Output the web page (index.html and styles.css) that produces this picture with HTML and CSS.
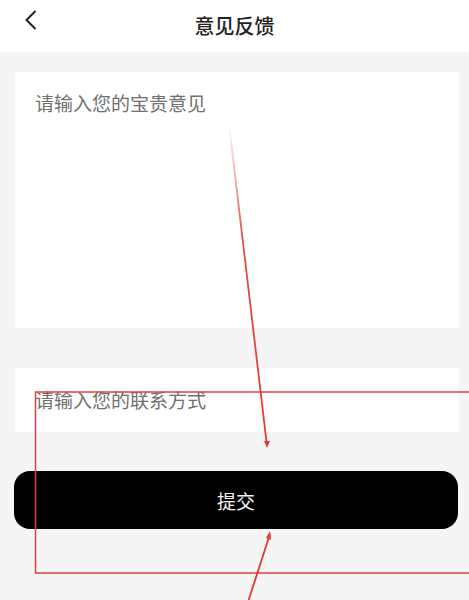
FILE: index.html
```html
<!DOCTYPE html>
<html lang="zh-CN">
<head>
<meta charset="UTF-8">
<title>意见反馈</title>
<link rel="stylesheet" href="styles.css">
</head>
<body>
    <div class="header">
        <span class="back">
            <svg width="12" height="20" viewBox="0 0 12 20"><path d="M10.5 1 L1.5 10 L10.5 19" fill="none" stroke="#222" stroke-width="2"/></svg>
        </span>
        <h1>意见反馈</h1>
    </div>

    <div class="container">
        <div class="card card-big">
            <div class="placeholder">请输入您的宝贵意见</div>
        </div>
        <div class="card card-small">
            <div class="placeholder">请输入您的联系方式</div>
        </div>
        <button type="button" class="submit">提交</button>
    </div>

    <!-- red marks drawn over the screenshot -->
    <svg class="marks" width="469" height="600" viewBox="0 0 469 600">
        <defs>
            <linearGradient id="fade" x1="0" y1="0" x2="0" y2="1">
                <stop offset="0" stop-color="#e23a36" stop-opacity="0"/>
                <stop offset="0.35" stop-color="#e23a36" stop-opacity="0.9"/>
                <stop offset="1" stop-color="#e23a36"/>
            </linearGradient>
        </defs>
        <rect x="35.5" y="392" width="450" height="181" fill="none" stroke="#e0403c" stroke-width="1.5"/>
        <path d="M229 124 L267 446" stroke="url(#fade)" stroke-width="1.8" fill="none"/>
        <path d="M264 441 L267 448 L270 441 Z" fill="#e23a36"/>
        <path d="M248 602 L270 534" stroke="#e23a36" stroke-width="1.8" fill="none"/>
        <path d="M266 538 L270 531 L271 540 Z" fill="#e23a36"/>
    </svg>
</body>
</html>
```

FILE: styles.css
```css
body {
    margin: 0;
    font-family: "Noto Sans CJK SC", "Noto Sans", sans-serif;
    background: #f5f5f5;
    position: relative;
    height: 600px;
    overflow: hidden;
}

.header {
    height: 52px;
    background: #ffffff;
    display: flex;
    align-items: center;
    justify-content: center;
    position: relative;
}

.header h1 {
    margin: 0;
    font-size: 20px;
    font-weight: 500;
    color: #222222;
    line-height: 42px;
}

.back {
    position: absolute;
    left: 25px;
    top: 10px;
    display: flex;
}

.container {
    padding: 20px 10px 0 15px;
}

.card {
    background: #ffffff;
    padding: 0 20px;
}

.card-big {
    height: 256px;
    padding-top: 19px;
    box-sizing: border-box;
}

.card-small {
    height: 64px;
    margin-top: 40px;
    display: flex;
    align-items: center;
}

.placeholder {
    font-size: 19px;
    line-height: 24px;
    color: #707070;
}

.submit {
    display: block;
    width: 100%;
    height: 58px;
    margin-top: 39px;
    margin-left: -1px;
    border: none;
    border-radius: 16px;
    background: #000000;
    color: #f2f2f2;
    font-family: inherit;
    font-size: 19px;
}

.marks {
    position: absolute;
    left: 0;
    top: 0;
    pointer-events: none;
}
```
